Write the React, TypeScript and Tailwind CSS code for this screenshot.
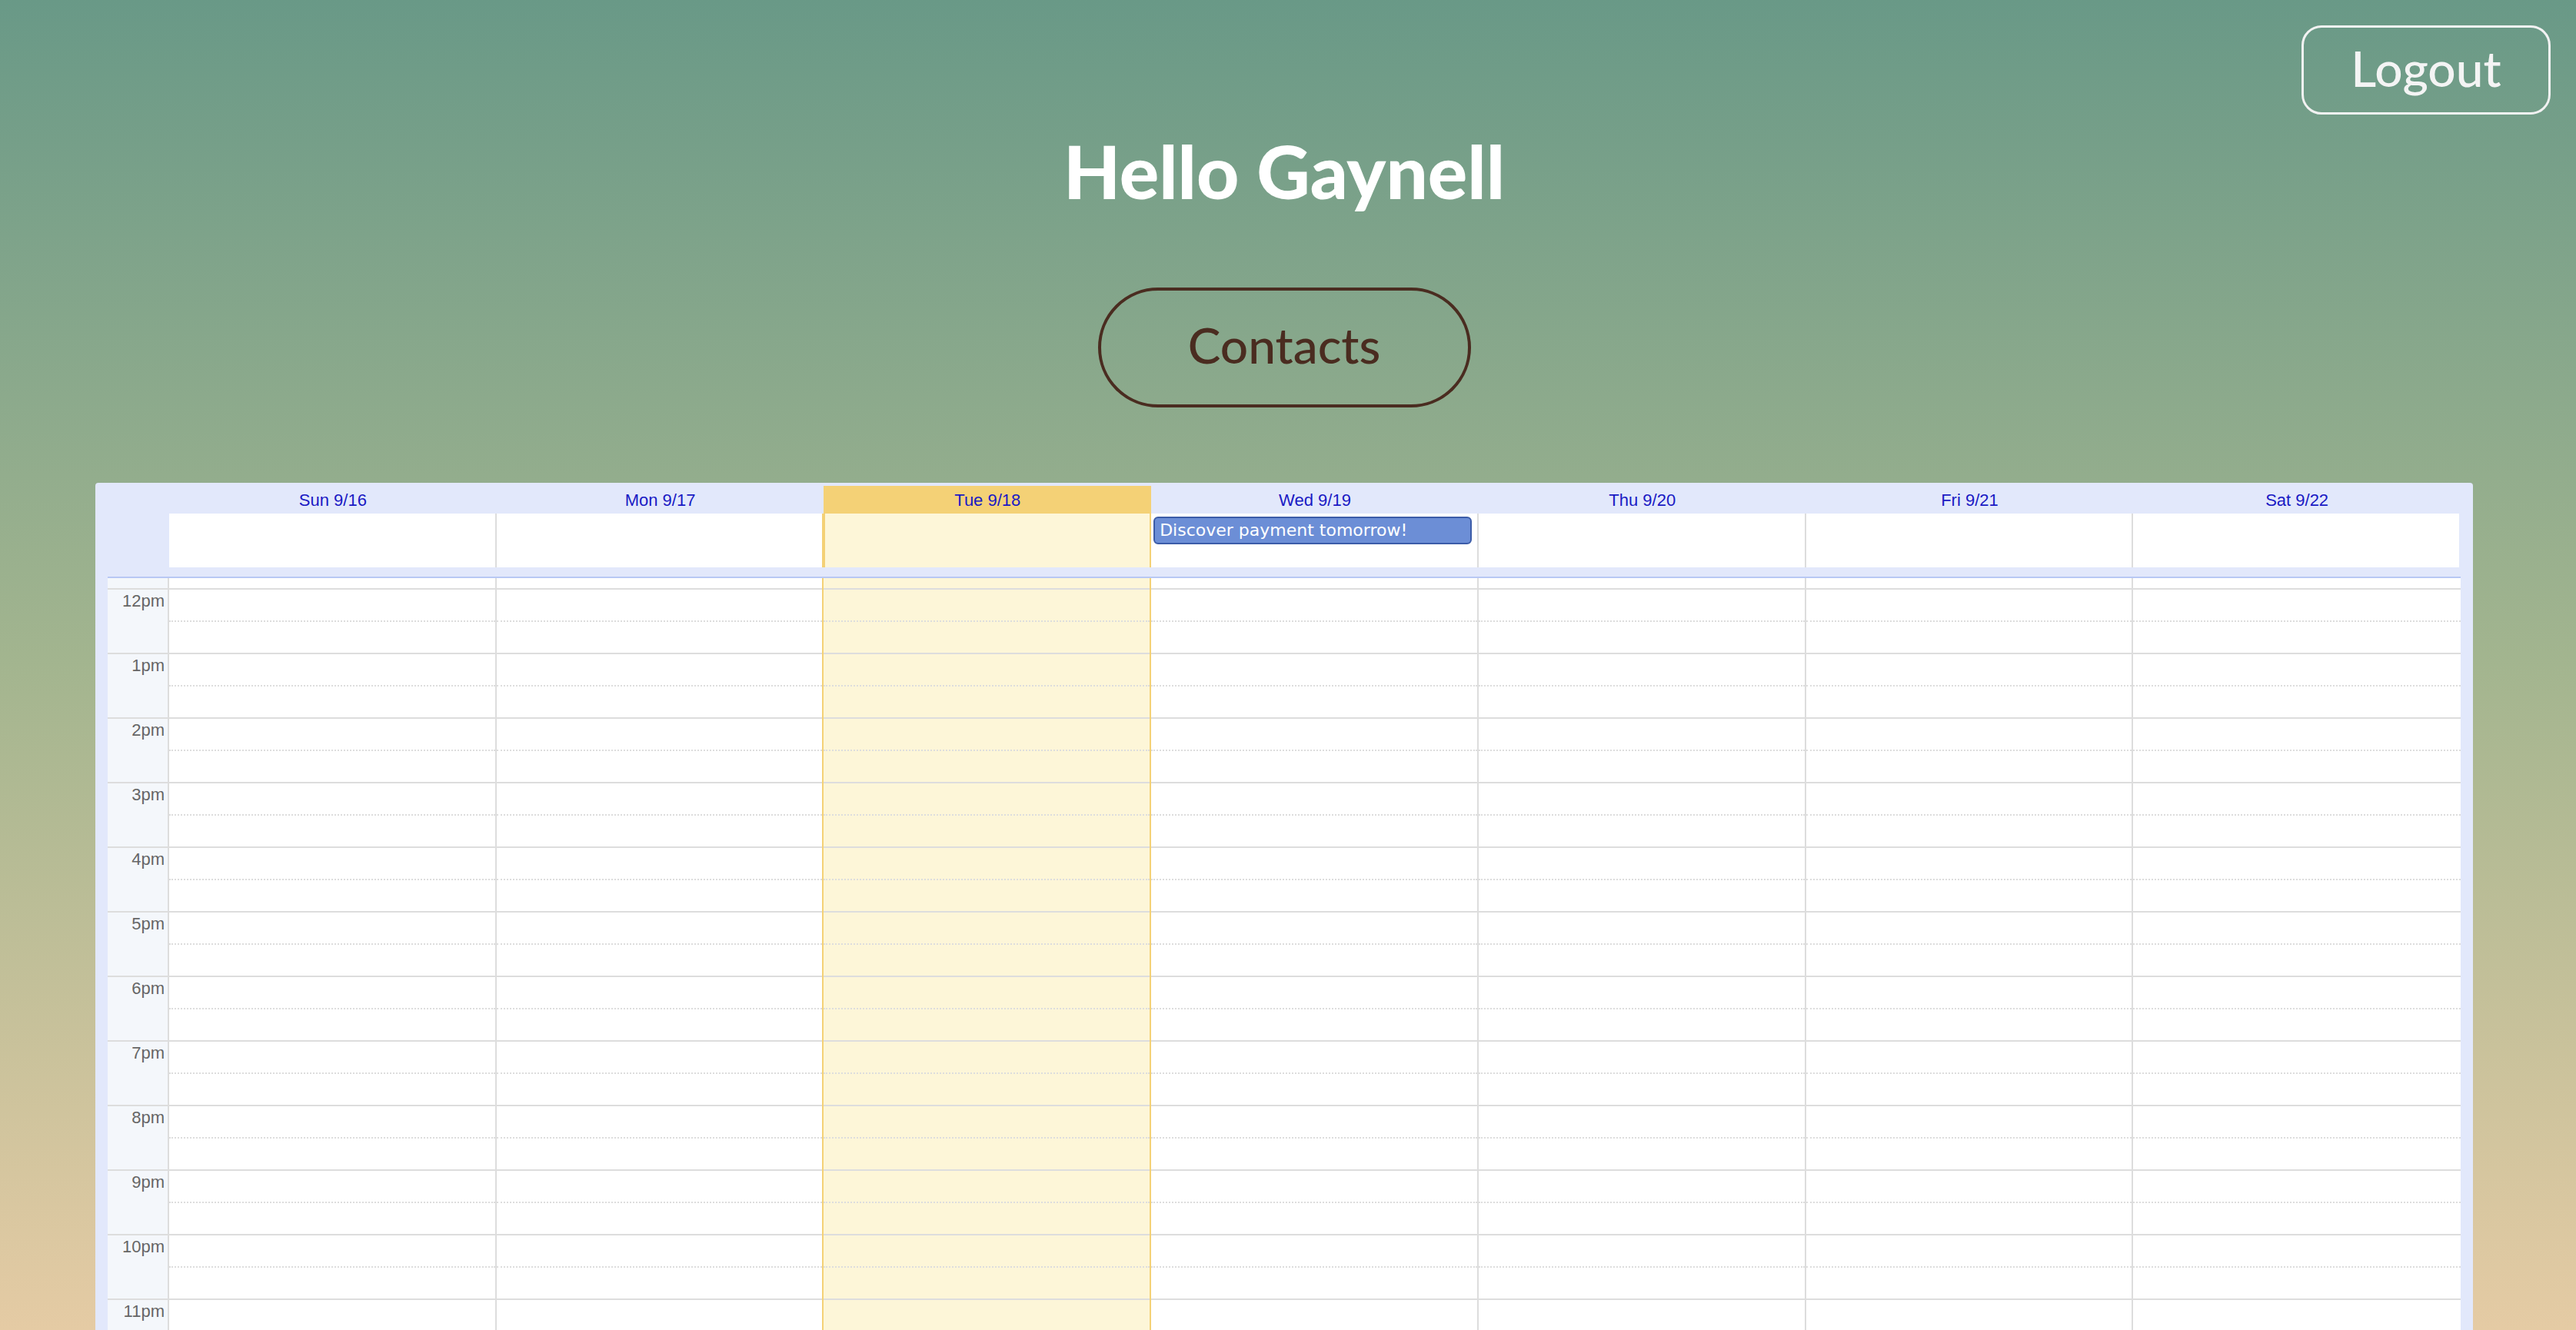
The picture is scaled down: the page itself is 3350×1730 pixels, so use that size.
const days = ['Sun 9/16', 'Mon 9/17', 'Tue 9/18', 'Wed 9/19', 'Thu 9/20', 'Fri 9/21', 'Sat 9/22'];
const hours = ['12pm', '1pm', '2pm', '3pm', '4pm', '5pm', '6pm', '7pm', '8pm', '9pm', '10pm', '11pm'];
const TODAY = 2;

// right border colour of each day column (today's edges are yellow)
function colBorder(i: number) {
  if (i === days.length - 1) return 'border-r-0';
  if (i === TODAY - 1 || i === TODAY) return 'border-r-2 border-[#f4d176]';
  return 'border-r-2 border-[#dddddd]';
}

function DayColumn({ index }: { index: number }) {
  const today = index === TODAY;
  return (
    <div className={`flex flex-col ${colBorder(index)} ${today ? 'bg-[#fdf6d8]' : 'bg-white'}`}>
      <div className="h-[15px] border-b-2 border-[#dddddd]" />
      {hours.map((h) => (
        <div key={h} className="flex flex-col">
          <div className="h-[42px] border-b-2 border-dotted border-[#dddddd]" />
          <div className="h-[42px] border-b-2 border-solid border-[#dddddd]" />
        </div>
      ))}
    </div>
  );
}

function Calendar() {
  return (
    <div className="mx-[124px] bg-[#e2e8fb] pt-[4px] rounded-t-[4px] font-['Liberation_Sans',Arial,sans-serif]">
      {/* day headers */}
      <div className="grid grid-cols-[80px_repeat(7,minmax(0,1fr))] px-[16px] h-[36px]">
        <div />
        {days.map((d, i) => (
          <div
            key={d}
            className={`text-center text-[22px] leading-[38px] text-[#1a1ac4] ${i === TODAY ? 'bg-[#f4d176]' : ''}`}
          >
            {d}
          </div>
        ))}
      </div>

      {/* all-day row */}
      <div className="grid grid-cols-[80px_repeat(7,minmax(0,1fr))] px-[16px] h-[70px]">
        <div />
        {days.map((d, i) => (
          <div
            key={d}
            className={`${colBorder(i)} ${i === TODAY ? 'bg-[#fdf6d8] border-l-2 border-l-[#f4d176]' : 'bg-white'} ${i === 6 ? 'mr-[2px]' : ''}`}
          >
            {i === 3 && (
              <div className="pt-[4px] pl-[3px] pr-[7px]">
                <div className="h-[36px] rounded-[6px] border-2 border-[#3c5ca8] bg-[#6c8ed6] pl-[6px] text-white text-[22px] leading-[32px] font-['DejaVu_Sans',Verdana,sans-serif] whitespace-nowrap overflow-hidden">
                  Discover payment tomorrow!
                </div>
              </div>
            )}
          </div>
        ))}
      </div>

      <div className="h-[12px]" />

      {/* time grid */}
      <div className="mx-[16px] border-t-2 border-[#b8c8f4] grid grid-cols-[80px_repeat(7,minmax(0,1fr))]">
        <div className="flex flex-col bg-[#f4f7fb] border-r-2 border-[#dddddd]">
          <div className="h-[15px] border-b-2 border-[#dddddd]" />
          {hours.map((h) => (
            <div
              key={h}
              className="h-[84px] border-b-2 border-[#dddddd] pr-[4px] pt-[2px] text-right text-[22px] leading-[26px] text-[#666666]"
            >
              {h}
            </div>
          ))}
        </div>
        {days.map((d, i) => (
          <DayColumn key={d} index={i} />
        ))}
      </div>
    </div>
  );
}

export default function App() {
  return (
    <div className="h-[1730px] w-full overflow-hidden bg-gradient-to-b from-[#699987] via-[#a3b58f] to-[#e5cba4] font-['Lato','Noto_Sans',sans-serif]">
      <div className="relative w-[3340px]">
        <button className="absolute top-[33px] right-[23px] w-[324px] h-[116px] rounded-[26px] border-[3px] border-[#f2f2f2] text-[64px] leading-none font-medium text-[#f4f4f4] flex items-center justify-center pb-[4px]">
          Logout
        </button>

        <h1 className="pt-[174px] text-center text-[96px] leading-none font-black text-white">Hello Gaynell</h1>

        <div className="flex justify-center pt-[104px]">
          <button className="w-[485px] h-[156px] rounded-full border-4 border-[#4a2c20] text-[64px] leading-none font-medium text-[#4a2c20] flex items-center justify-center pb-[6px]">
            Contacts
          </button>
        </div>

        <div className="h-[98px]" />

        <Calendar />
      </div>
    </div>
  );
}
